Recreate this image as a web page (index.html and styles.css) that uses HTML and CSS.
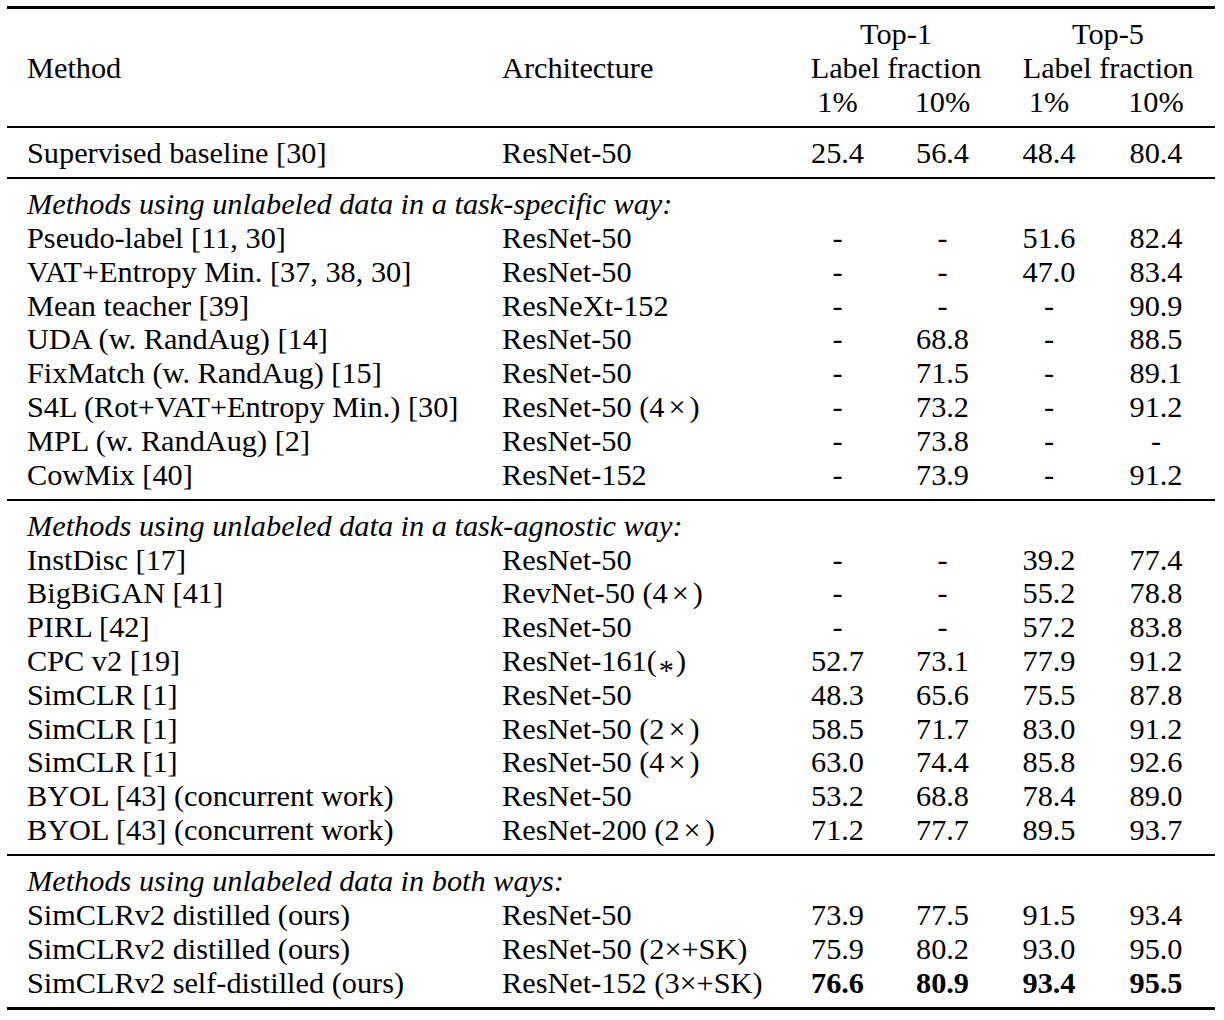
FILE: index.html
```html
<!DOCTYPE html>
<html>
<head>
<meta charset="utf-8">
<link rel="stylesheet" href="styles.css">
</head>
<body>
<div class="tbl">
  <div class="rule thick top"></div>

  <div class="c l h3">Method</div>
  <div class="c l h3">Architecture</div>
  <div class="c n s2">Top-1</div>
  <div class="c n s2 r">Top-5</div>
  <div class="c n s2">Label fraction</div>
  <div class="c n s2 r">Label fraction</div>
  <div class="c n">1%</div><div class="c n">10%</div><div class="c n">1%</div><div class="c n">10%</div>

  <div class="rule"></div>

  <div class="c l">Supervised baseline [30]</div><div class="c l">ResNet-50</div><div class="c n">25.4</div><div class="c n">56.4</div><div class="c n">48.4</div><div class="c n">80.4</div>

  <div class="rule"></div>

  <div class="c l sec">Methods using unlabeled data in a task-specific way:</div>
  <div class="c l">Pseudo-label [11, 30]</div><div class="c l">ResNet-50</div><div class="c n">-</div><div class="c n">-</div><div class="c n">51.6</div><div class="c n">82.4</div>
  <div class="c l">VAT+Entropy Min. [37, 38, 30]</div><div class="c l">ResNet-50</div><div class="c n">-</div><div class="c n">-</div><div class="c n">47.0</div><div class="c n">83.4</div>
  <div class="c l">Mean teacher [39]</div><div class="c l">ResNeXt-152</div><div class="c n">-</div><div class="c n">-</div><div class="c n">-</div><div class="c n">90.9</div>
  <div class="c l">UDA (w. RandAug) [14]</div><div class="c l">ResNet-50</div><div class="c n">-</div><div class="c n">68.8</div><div class="c n">-</div><div class="c n">88.5</div>
  <div class="c l">FixMatch (w. RandAug) [15]</div><div class="c l">ResNet-50</div><div class="c n">-</div><div class="c n">71.5</div><div class="c n">-</div><div class="c n">89.1</div>
  <div class="c l">S4L (Rot+VAT+Entropy Min.) [30]</div><div class="c l">ResNet-50 (4<span class="x">×</span>)</div><div class="c n">-</div><div class="c n">73.2</div><div class="c n">-</div><div class="c n">91.2</div>
  <div class="c l">MPL (w. RandAug) [2]</div><div class="c l">ResNet-50</div><div class="c n">-</div><div class="c n">73.8</div><div class="c n">-</div><div class="c n">-</div>
  <div class="c l">CowMix [40]</div><div class="c l">ResNet-152</div><div class="c n">-</div><div class="c n">73.9</div><div class="c n">-</div><div class="c n">91.2</div>

  <div class="rule"></div>

  <div class="c l sec">Methods using unlabeled data in a task-agnostic way:</div>
  <div class="c l">InstDisc [17]</div><div class="c l">ResNet-50</div><div class="c n">-</div><div class="c n">-</div><div class="c n">39.2</div><div class="c n">77.4</div>
  <div class="c l">BigBiGAN [41]</div><div class="c l">RevNet-50 (4<span class="x">×</span>)</div><div class="c n">-</div><div class="c n">-</div><div class="c n">55.2</div><div class="c n">78.8</div>
  <div class="c l">PIRL [42]</div><div class="c l">ResNet-50</div><div class="c n">-</div><div class="c n">-</div><div class="c n">57.2</div><div class="c n">83.8</div>
  <div class="c l">CPC v2 [19]</div><div class="c l">ResNet-161(<span class="ast">*</span>)</div><div class="c n">52.7</div><div class="c n">73.1</div><div class="c n">77.9</div><div class="c n">91.2</div>
  <div class="c l">SimCLR [1]</div><div class="c l">ResNet-50</div><div class="c n">48.3</div><div class="c n">65.6</div><div class="c n">75.5</div><div class="c n">87.8</div>
  <div class="c l">SimCLR [1]</div><div class="c l">ResNet-50 (2<span class="x">×</span>)</div><div class="c n">58.5</div><div class="c n">71.7</div><div class="c n">83.0</div><div class="c n">91.2</div>
  <div class="c l">SimCLR [1]</div><div class="c l">ResNet-50 (4<span class="x">×</span>)</div><div class="c n">63.0</div><div class="c n">74.4</div><div class="c n">85.8</div><div class="c n">92.6</div>
  <div class="c l">BYOL [43] (concurrent work)</div><div class="c l">ResNet-50</div><div class="c n">53.2</div><div class="c n">68.8</div><div class="c n">78.4</div><div class="c n">89.0</div>
  <div class="c l">BYOL [43] (concurrent work)</div><div class="c l">ResNet-200 (2<span class="x">×</span>)</div><div class="c n">71.2</div><div class="c n">77.7</div><div class="c n">89.5</div><div class="c n">93.7</div>

  <div class="rule"></div>

  <div class="c l sec">Methods using unlabeled data in both ways:</div>
  <div class="c l">SimCLRv2 distilled (ours)</div><div class="c l">ResNet-50</div><div class="c n">73.9</div><div class="c n">77.5</div><div class="c n">91.5</div><div class="c n">93.4</div>
  <div class="c l">SimCLRv2 distilled (ours)</div><div class="c l">ResNet-50 (2×+SK)</div><div class="c n">75.9</div><div class="c n">80.2</div><div class="c n">93.0</div><div class="c n">95.0</div>
  <div class="c l">SimCLRv2 self-distilled (ours)</div><div class="c l">ResNet-152 (3×+SK)</div><div class="c n b">76.6</div><div class="c n b">80.9</div><div class="c n b">93.4</div><div class="c n b">95.5</div>

  <div class="rule thick"></div>
</div>
</body>
</html>
```

FILE: styles.css
```css
html, body {
  margin: 0;
  padding: 0;
  background: #fff;
}
body {
  font-family: "Liberation Serif", "Times New Roman", serif;
  font-size: 30.3px;
  color: #000;
}
.tbl {
  display: grid;
  grid-template-columns: 475px 309px 93px 117px 96px 118px;
  width: 1208px;
  margin: 6px 0 0 7px;
}
.rule {
  grid-column: 1 / -1;
  height: 2px;
  background: #000;
  margin: 6.5px 0 9px;
}
.rule.thick {
  height: 3px;
}
.rule.top {
  margin-top: 0;
}
.c {
  height: 33.8px;
  line-height: 33.8px;
  white-space: nowrap;
}
.l {
  padding-left: 20px;
}
.n {
  text-align: center;
}
.h3 {
  grid-row: span 3;
  height: auto;
  align-self: center;
}
.s2 {
  grid-column: span 2;
}
.sec {
  grid-column: 1 / -1;
  font-style: italic;
}
.b {
  font-weight: bold;
}
.x {
  padding: 0 4px;
}
.ast {
  vertical-align: -0.28em;
  padding: 0 2px;
}
```
